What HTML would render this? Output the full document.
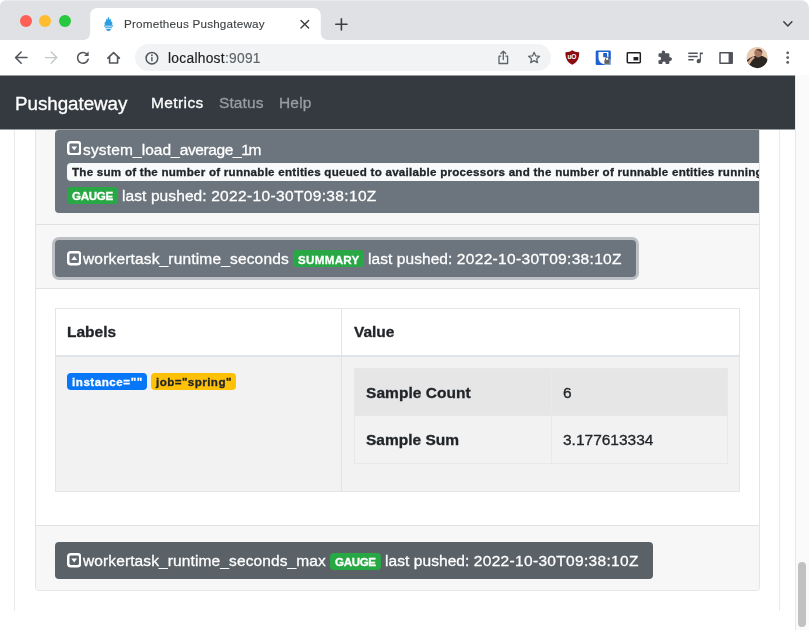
<!DOCTYPE html>
<html lang="en">
<head>
<meta charset="utf-8">
<title>Prometheus Pushgateway</title>
<style>
*{box-sizing:border-box;margin:0;padding:0}
html,body{width:809px;height:630px;overflow:hidden;background:#fff}
body{font-family:"Liberation Sans",Arial,sans-serif;color:#212529;position:relative}
.abs{position:absolute}
/* ---------- browser chrome ---------- */
#tabbar{left:0;top:0;width:809px;height:40px;background:#dfe1e5;border-radius:6px 8px 0 0;border-top:1px solid #e9ebee}
.light{width:12px;height:12px;border-radius:50%}
#toolbar{left:0;top:40px;width:809px;height:35px;background:#fff}
#omni{left:135px;top:44px;width:416px;height:27px;border-radius:13.500px;background:#f1f3f4}
/* ---------- page ---------- */
#navbar{left:0;top:75px;width:795px;height:55px;background:#343a40;background:linear-gradient(rgba(52,58,64,.5) 0 1px,#343a40 1px 54px,rgba(52,58,64,.5) 54px 55px)}
#page{left:0;top:130px;width:795px;height:500px;background:#fff;overflow:hidden}
#scroll{left:795px;top:75px;width:14px;height:555px;background:#fafafa;border-left:1px solid #e8e8e8}
#thumb{left:798.300px;top:562px;width:7.600px;height:64.500px;border-radius:4px;background:#c1c1c1}
#card{left:35px;top:0;width:725px;height:461px;border:1px solid #e5e5e5;border-top:0;border-radius:0 0 4px 4px;overflow:hidden;background:#fff}
.hdr{left:0;width:723px;background:#f7f7f7;border-bottom:1px solid #e2e2e2}
#tbl{left:19px;top:178px;width:685px;height:184px;border:1px solid #e3e6e9;background:#fff}
.btn{color:#fff;background:#6c757d;border-radius:4px;font-size:16px;white-space:nowrap}
.bg{border-radius:4px}
.tx{position:absolute;white-space:nowrap;line-height:1;overflow:visible;-webkit-text-stroke:.3px currentColor;will-change:transform}
</style>
</head>
<body>
<!-- tab strip -->
<div id="tabbar" class="abs"></div>
<div class="abs light" style="left:20px;top:15px;background:#fe5f57"></div>
<div class="abs light" style="left:39px;top:15px;background:#febc2e"></div>
<div class="abs light" style="left:59px;top:15px;background:#28c840"></div>
<svg class="abs" style="left:0;top:0" width="340" height="40" viewBox="0 0 340 40"><path d="M82.500 40c4.500 0 7.700-2.500 7.700-7.500V15.500c0-4.500 3-7.500 7.500-7.500h215.600c4.500 0 7.500 3 7.500 7.500v17c0 5 3.200 7.500 7.700 7.500z" fill="#fff"/></svg>
<!-- toolbar -->
<div id="toolbar" class="abs"></div>
<div id="omni" class="abs"></div>
<!-- ICONS -->
<svg class="abs" style="left:0;top:0" width="809" height="76" viewBox="0 0 809 76" fill="none" stroke-linecap="round" stroke-linejoin="round">
 <!-- favicon: prometheus flame -->
 <g fill="#2d9ee2" stroke="none">
  <path d="M104.900 24.900c-.4-1.500-.3-2.900.4-4 .1.700.3 1.100.7 1.300 0-1.400 0-2.500.5-3.700.3.500.5 1.100.9 1.600.2-1.200.4-2.300 1.100-3.300.700 1 .900 2.100 1.100 3.300.400-.500.600-1.100.900-1.600.500 1.200.500 2.300.500 3.700.400-.200.600-.600.700-1.300.700 1.100.800 2.500.400 4z"/>
  <rect x="104" y="25.350" width="9.100" height="1.150" rx=".3"/>
  <rect x="105.100" y="27.150" width="6.900" height="1.150" rx=".3"/>
  <path d="M106.100 28.950h4.900c-.3 1.300-1.300 2.050-2.450 2.050s-2.150-.75-2.450-2.050z"/>
 </g>
 <!-- tab close -->
 <path d="M301 20.500l7.600 7.600M308.600 20.500l-7.600 7.600" stroke="#3c4043" stroke-width="1.400"/>
 <!-- new tab + -->
 <path d="M335.800 24.300h11.200M341.400 18.700v11.200" stroke="#3c4043" stroke-width="1.600"/>
 <!-- tab search chevron -->
 <path d="M783.800 21.800l4.050 4.200 4.050-4.200" stroke="#3c4043" stroke-width="1.500"/>
 <!-- back -->
 <path d="M27 57.600H15.600M21.200 52l-5.600 5.600 5.600 5.600" stroke="#53575c" stroke-width="1.500"/>
 <!-- forward (disabled) -->
 <path d="M45.400 57.600h11.400M51.200 52l5.600 5.600-5.600 5.600" stroke="#c4c7ca" stroke-width="1.400"/>
 <!-- reload -->
 <path d="M87.300 54.600a5.400 5.400 0 1 0 .9 4.600" stroke="#53575c" stroke-width="1.600"/>
 <path d="M88.600 51.400v4.600h-4.600z" fill="#53575c" stroke="none"/>
 <!-- home -->
 <path d="M109.600 57.200v5.800h8v-5.800M107.800 58.200l5.800-5.500 5.800 5.500" stroke="#53575c" stroke-width="1.600"/>
 <!-- info -->
 <circle cx="151.900" cy="58.200" r="5.800" stroke="#53575c" stroke-width="1.500"/>
 <path d="M151.900 57.400v3.400" stroke="#53575c" stroke-width="1.400"/>
 <circle cx="151.900" cy="55.200" r=".85" fill="#53575c"/>
 <!-- share -->
 <path d="M500.700 56.200h-1.700v7.300h8.600v-7.300h-1.700M503.300 59.600v-8.200M500.900 53.500l2.400-2.400 2.400 2.400" stroke="#5f6368" stroke-width="1.300"/>
 <!-- star -->
 <path d="M534.100 52.300l1.600 3.600 3.900.350-2.950 2.600.9 3.800-3.450-2-3.450 2 .9-3.800-2.950-2.600 3.900-.350z" stroke="#5f6368" stroke-width="1.250"/>
 <!-- ublock -->
 <path d="M572.300 50.200c1.700 1.300 3.700 1.900 6.400 2 .4 0 .5.100.5.500 0 5.900-2 9.500-6.900 12.100-4.900-2.600-6.900-6.200-6.900-12.100 0-.400.100-.500.500-.500 2.700-.100 4.700-.700 6.400-2z" fill="#8c0b12" stroke="none"/>
 <text x="567.500" y="59.100" font-family="Liberation Sans,sans-serif" font-weight="700" font-size="6.600" fill="#fff" stroke="none" letter-spacing="-.2">uO</text>
 <!-- privacy ext -->
 <rect x="595.700" y="50.400" width="15.100" height="14.700" rx="1.300" fill="#1f60d2" stroke="none"/>
 <path d="M598.500 51.900h9.900v7.500c-1.300 2.300-3.100 3.900-5.400 4.700-2.700-.900-4.500-3.300-4.500-6.300z" fill="#fff" stroke="none"/>
 <rect x="603.200" y="53" width="3.800" height="4.200" fill="#1f60d2" stroke="none"/>
 <rect x="604.100" y="59.600" width="6.100" height="4.700" rx=".7" fill="#5d5f61" stroke="#fff" stroke-width=".6"/>
 <path d="M605.500 59.600v-.9a1.650 1.650 0 0 1 3.300 0v.9" stroke="#5d5f61" stroke-width="1"/>
 <!-- pip -->
 <rect x="627.300" y="52.800" width="13" height="10" rx=".700" stroke="#202124" stroke-width="1.500"/>
 <rect x="633.500" y="57" width="4.800" height="3.400" fill="#202124"/>
 <!-- puzzle -->
 <path d="M663.400 50.600a1.700 1.700 0 0 1 1.700 1.700v.9h3.300a1 1 0 0 1 1 1v3.100h.8a1.800 1.800 0 0 1 0 3.600h-.8v2.100a1 1 0 0 1-1 1h-2.700v-.9a1.700 1.700 0 0 0-3.400 0v.9h-2.800a1 1 0 0 1-1-1v-2.800h.9a1.700 1.700 0 0 0 0-3.400h-.9v-2.600a1 1 0 0 1 1-1h2.200v-.9a1.700 1.700 0 0 1 1.700-1.700z" fill="#50545a"/>
 <!-- media queue -->
 <path d="M688.300 53.200h9.400M688.300 56.500h9.400M688.300 59.800h5.400" stroke="#50545a" stroke-width="1.400" stroke-linecap="butt"/>
 <path d="M699.800 52.500h3.100v1.800h-2v6.800a2.100 2.100 0 1 1-1.100-1.850z" fill="#50545a"/>
 <!-- side panel -->
 <rect x="720" y="52.800" width="12.200" height="10.400" stroke="#50545a" stroke-width="1.500"/>
 <rect x="728.600" y="52.800" width="3.600" height="10.400" fill="#50545a"/>
 <!-- avatar -->
 <defs><clipPath id="av"><circle cx="757.200" cy="57.600" r="10.600"/></clipPath><filter id="bl" x="-20%" y="-20%" width="140%" height="140%"><feGaussianBlur stdDeviation=".600"/></filter></defs>
 <g clip-path="url(#av)" stroke="none"><g filter="url(#bl)">
  <rect x="744" y="44" width="27" height="27" fill="#e6cbb0"/>
  <path d="M746 61c2-1.800 4-3.300 6.500-4.300 3-1.300 6.500-1.700 9.500-.8 3 .9 5.500 2.700 7 5.100v8h-23z" fill="#2a2524"/>
  <path d="M754.300 52.300c.3-2.300 2.300-3.700 4.500-3.500 2.300.2 3.800 2.100 3.500 4.500-.3 2.300-1.700 4.300-4.300 4.100-2.500-.2-4-2.700-3.700-5.100z" fill="#a9775e"/>
  <path d="M756 49.800c1.500-1.200 4-1 5.300.3.800.8 1 1.800.9 2.800-1.500-1.300-3.700-2.200-6.200-3.100z" fill="#5b4034"/>
  <path d="M747.500 62.500c1.300-2.300 3.500-4.800 6.300-6.300l1 1.700c-2 1.600-3.700 3.800-5 6.300z" fill="#d8a586"/>
 </g></g>
 <!-- menu dots -->
 <g fill="#5a5e63" stroke="none"><circle cx="787.700" cy="52.800" r="1.400"/><circle cx="787.700" cy="57.600" r="1.400"/><circle cx="787.700" cy="62.400" r="1.400"/></g>
</svg>
<!-- /ICONS -->
<!-- navbar -->
<div id="navbar" class="abs"></div>
<!-- page -->
<div id="page" class="abs">
 <!-- outer card (job group) -->
 <div class="abs" style="left:14px;top:-40px;width:766px;height:521px;border:1px solid #ebebeb;border-width:0 1px"></div>
 <!-- inner accordion card -->
 <div id="card" class="abs">
  <div class="abs hdr" style="top:-20px;height:115px"></div>
  <div class="abs hdr" style="top:95px;height:64px"></div>
  <div class="abs hdr" style="top:395px;height:65px;border-bottom:0;border-top:1px solid #e2e2e2"></div>
  <!-- metrics table -->
  <div id="tbl" class="abs">
   <div class="abs" style="left:0;top:0;width:683px;height:47.500px;border-bottom:2px solid #e0e3e7"></div>
   <div class="abs" style="left:0;top:47.500px;width:683px;height:134.500px;background:#f2f2f2"></div>
   <div class="abs" style="left:285px;top:0;width:1px;height:182px;background:#e1e4e8"></div>
   <!-- nested table -->
   <div class="abs" style="left:298px;top:59px;width:374px;height:96px;border:1px solid #e6e8ea;background:#f2f2f2">
    <div class="abs" style="left:0;top:0;width:372px;height:47px;background:#e6e6e6;border-bottom:1px solid #e7e8e9"></div>
    <div class="abs" style="left:196px;top:0;width:1px;height:94px;background:#e7e9eb"></div>
   </div>
  </div>
  <!-- button 1 -->
  <div class="abs btn" style="left:19px;top:0;width:720px;height:83px;border-radius:4px 0 0 4px"></div>
  <!-- button 2 (focused) -->
  <div class="abs btn" style="left:19px;top:110px;width:581px;height:37px;box-shadow:0 0 0 3px #bcc0c4"></div>
  <!-- button 3 (hover) -->
  <div class="abs btn" style="left:19px;top:412px;width:598px;height:37px;background:#5a6268"></div>
 </div>
</div>
<!-- BADGES -->
<div class="abs bg" style="left:67.300px;top:163.400px;width:691.700px;height:17.400px;background:#f8f9fa;border-radius:4px 0 0 4px"></div>
<div class="abs bg" style="left:67.300px;top:186.500px;width:50.800px;height:17.300px;background:#28a745"></div>
<div class="abs bg" style="left:293.300px;top:250.200px;width:70.300px;height:17.300px;background:#28a745"></div>
<div class="abs bg" style="left:330.200px;top:552.500px;width:50.800px;height:17.300px;background:#28a745"></div>
<div class="abs bg" style="left:67.300px;top:372.700px;width:79.600px;height:17.300px;background:#0777f8"></div>
<div class="abs bg" style="left:151.400px;top:372.700px;width:84.500px;height:17.300px;background:#ffc107"></div>
<svg class="abs" style="left:67.1px;top:141.0px" width="14.400" height="14.400" viewBox="0 0 14.400 14.400"><rect x="1.200" y="1.200" width="12" height="12" rx="2.600" fill="none" stroke="#fff" stroke-width="2.500"/><path d="M4.300 5.500h5.800L7.200 9.400z" fill="#fff"/></svg>
<svg class="abs" style="left:67.1px;top:251.3px" width="14.400" height="14.400" viewBox="0 0 14.400 14.400"><rect x="1.200" y="1.200" width="12" height="12" rx="2.600" fill="none" stroke="#fff" stroke-width="2.500"/><path d="M4.300 9h5.800L7.200 5.100z" fill="#fff"/></svg>
<svg class="abs" style="left:67.1px;top:553.3px" width="14.400" height="14.400" viewBox="0 0 14.400 14.400"><rect x="1.200" y="1.200" width="12" height="12" rx="2.600" fill="none" stroke="#fff" stroke-width="2.500"/><path d="M4.300 5.500h5.800L7.200 9.400z" fill="#fff"/></svg>
<!-- /BADGES -->
<!-- TEXT -->
<span id="tabtitle" class="tx" style="left:124.23px;top:17.60px;font-size:11.7px;font-weight:400;color:#3c4043;letter-spacing:0.198px;-webkit-text-stroke:.1px currentColor">Prometheus Pushgateway</span>
<span id="url" class="tx" style="left:167.55px;top:52.32px;font-size:13.8px;font-weight:400;color:#202124;letter-spacing:0.271px;-webkit-text-stroke:.15px currentColor">localhost<span style="color:#5f6368">:9091</span></span>
<span id="brand" class="tx" style="left:15.15px;top:95.09px;font-size:18.8px;font-weight:400;color:#fff;letter-spacing:-0.034px;">Pushgateway</span>
<span id="nav1" class="tx" style="left:150.98px;top:94.98px;font-size:15.5px;font-weight:400;color:#fff;letter-spacing:0.396px;">Metrics</span>
<span id="nav2" class="tx" style="left:218.88px;top:94.98px;font-size:15.5px;font-weight:400;color:#9a9da0;letter-spacing:0.095px;">Status</span>
<span id="nav3" class="tx" style="left:278.88px;top:94.98px;font-size:15.5px;font-weight:400;color:#9a9da0;letter-spacing:0.180px;">Help</span>
<span id="m1" class="tx" style="left:82.78px;top:141.58px;font-size:15.5px;font-weight:400;color:#fff;letter-spacing:-0.161px;"><span style="letter-spacing:0.153px">system_</span><span style="letter-spacing:-0.001px">load_</span><span style="letter-spacing:-0.386px">average_</span><span style="letter-spacing:-1.261px">1m</span></span>
<span id="g1" class="tx" style="left:72.04px;top:190.08px;font-size:11.6px;font-weight:700;color:#fff;letter-spacing:-0.330px;">GAUGE</span>
<span id="lp1" class="tx" style="left:122.28px;top:188.48px;font-size:15.5px;font-weight:400;color:#fff;letter-spacing:0.249px;"><span style="letter-spacing:0.095px">last pushed: </span><span style="letter-spacing:0.349px">2022-10-30T09:38:10Z</span></span>
<span id="m2" class="tx" style="left:82.78px;top:251.48px;font-size:15.5px;font-weight:400;color:#fff;letter-spacing:0.165px;">workertask_runtime_seconds</span>
<span id="g2" class="tx" style="left:297.64px;top:253.78px;font-size:11.6px;font-weight:700;color:#fff;letter-spacing:0.305px;">SUMMARY</span>
<span id="lp2" class="tx" style="left:367.98px;top:251.48px;font-size:15.5px;font-weight:400;color:#fff;letter-spacing:0.224px;"><span style="letter-spacing:0.070px">last pushed: </span><span style="letter-spacing:0.324px">2022-10-30T09:38:10Z</span></span>
<span id="m3" class="tx" style="left:82.78px;top:553.48px;font-size:15.5px;font-weight:400;color:#fff;letter-spacing:0.115px;">workertask_runtime_seconds_max</span>
<span id="g3" class="tx" style="left:335.14px;top:556.08px;font-size:11.6px;font-weight:700;color:#fff;letter-spacing:-0.355px;">GAUGE</span>
<span id="lp3" class="tx" style="left:385.28px;top:553.48px;font-size:15.5px;font-weight:400;color:#fff;letter-spacing:0.221px;"><span style="letter-spacing:0.067px">last pushed: </span><span style="letter-spacing:0.321px">2022-10-30T09:38:10Z</span></span>
<span id="thl" class="tx" style="left:67.18px;top:324.28px;font-size:15.5px;font-weight:700;color:#212529;letter-spacing:0.004px;">Labels</span>
<span id="thv" class="tx" style="left:353.98px;top:324.28px;font-size:15.5px;font-weight:700;color:#212529;letter-spacing:-0.043px;">Value</span>
<span id="b1" class="tx" style="left:72.04px;top:376.08px;font-size:11.6px;font-weight:700;color:#fff;letter-spacing:0.538px;">instance=""</span>
<span id="b2" class="tx" style="left:155.84px;top:376.08px;font-size:11.6px;font-weight:700;color:#212529;letter-spacing:0.438px;">job="spring"</span>
<span id="sc" class="tx" style="left:365.88px;top:384.78px;font-size:15.5px;font-weight:700;color:#212529;letter-spacing:0.048px;">Sample Count</span>
<span id="ss" class="tx" style="left:365.88px;top:432.18px;font-size:15.5px;font-weight:700;color:#212529;letter-spacing:0.011px;">Sample Sum</span>
<span id="v1" class="tx" style="left:562.88px;top:384.78px;font-size:15.5px;font-weight:400;color:#212529;letter-spacing:0.000px;">6</span>
<span id="v2" class="tx" style="left:562.88px;top:432.18px;font-size:15.5px;font-weight:400;color:#212529;letter-spacing:-0.009px;">3.177613334</span>
<div class="abs" style="left:0;top:160px;width:759px;height:24px;overflow:hidden"><span id="help" class="tx" style="left:72.35px;top:6.48px;font-size:11.6px;font-weight:700;color:#212529;letter-spacing:0.251px;">The sum of the number of runnable entities queued to available processors and the number of runnable entities running</span></div>
<!-- /TEXT -->
<div id="scroll" class="abs"></div>
<div id="thumb" class="abs"></div>
</body>
</html>
